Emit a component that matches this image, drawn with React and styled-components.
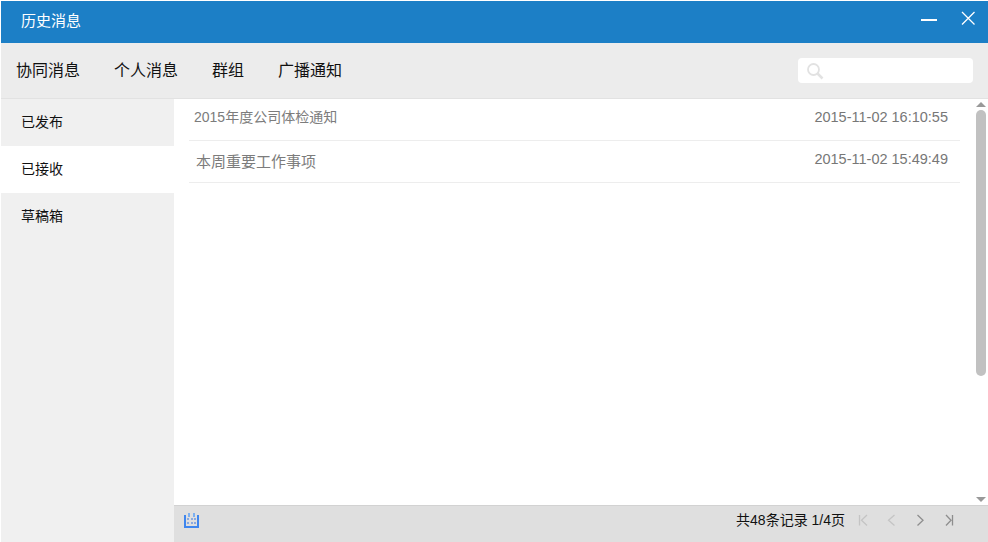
import React from "react";
import styled, { createGlobalStyle } from "styled-components";

const GlobalStyle = createGlobalStyle`
  html, body {
    margin: 0;
    padding: 0;
    background: #fff;
  }
  body {
    font-family: "Liberation Sans", "Noto Sans CJK SC", sans-serif;
  }
`;

const Win = styled.div`
  width: 988px;
  height: 542px;
  box-sizing: border-box;
  padding: 1px 0 0 1px;
  display: flex;
  flex-direction: column;
  overflow: hidden;
  background: #fff;
`;

const TitleBar = styled.div`
  height: 42px;
  flex: none;
  background: #1c7fc6;
  display: flex;
  align-items: center;
  padding: 0 12px 0 20px;
`;

const Title = styled.div`
  flex: 1;
  color: #fff;
  font-size: 15px;
  padding-bottom: 5px;
`;

const WinButton = styled.button`
  width: 16px;
  height: 16px;
  padding: 0;
  margin-left: 23px;
  margin-top: -8px;
  border: 0;
  background: transparent;
  display: flex;
`;

const Toolbar = styled.div`
  height: 55px;
  flex: none;
  box-sizing: border-box;
  background: #ececec;
  display: flex;
  align-items: center;
  padding: 0 15px;
`;

const Tabs = styled.div`
  flex: 1;
  display: flex;
  gap: 34px;
  padding-bottom: 4px;
`;

const Tab = styled.div`
  font-size: 16px;
  color: #111;
`;

const Search = styled.div`
  width: 175px;
  height: 25px;
  background: #fff;
  border-radius: 4px;
  display: flex;
  align-items: center;
  padding-left: 8px;
  box-sizing: border-box;
`;

const Body = styled.div`
  flex: 1;
  min-height: 0;
  display: flex;
  border-top: 1px solid #e2e2e2;
`;

const Sidebar = styled.div`
  width: 173px;
  flex: none;
  background: #f0f0f0;
`;

const SideItem = styled.div`
  height: 47px;
  box-sizing: border-box;
  display: flex;
  align-items: center;
  padding: 0 0 4px 20px;
  font-size: 14px;
  color: #111;
  background: ${(p) => (p.$active ? "#fff" : "transparent")};
`;

const Main = styled.div`
  flex: 1;
  min-width: 0;
  display: flex;
  flex-direction: column;
`;

const Content = styled.div`
  flex: 1;
  min-height: 0;
  display: flex;
`;

const List = styled.div`
  flex: 1;
  padding: 0 14px 0 15px;
`;

const Row = styled.div`
  height: 31px;
  border-bottom: 1px solid #ededed;
  display: flex;
  align-items: flex-start;
  justify-content: space-between;
  padding: 10px 12px 0 ${(p) => p.$indent}px;
  font-size: ${(p) => p.$size}px;
  line-height: ${(p) => p.$lineHeight}px;
  color: #7c7c7c;
`;

const Time = styled.span`
  font-size: 14.5px;
  line-height: 16px;
  color: #777;
`;

const Scrollbar = styled.div`
  width: 14px;
  flex: none;
  display: flex;
  flex-direction: column;
  align-items: center;
`;

const Arrow = styled.div`
  width: 0;
  height: 0;
  margin: ${(p) => (p.$down ? "0 0 3px" : "3px 0 0")};
  border-left: 5px solid transparent;
  border-right: 5px solid transparent;
  ${(p) => (p.$down ? "border-top" : "border-bottom")}: 5px solid #999;
`;

const Thumb = styled.div`
  width: 10px;
  height: 266px;
  margin-top: 3px;
  border-radius: 5px;
  background: #c1c1c1;
`;

const Track = styled.div`
  flex: 1;
`;

const Footer = styled.div`
  height: 37px;
  flex: none;
  box-sizing: border-box;
  background: #dfdfdf;
  border-top: 1px solid #d2d2d2;
  display: flex;
  align-items: center;
  padding: 0 25px 6px 10px;
`;

const Count = styled.div`
  margin-left: auto;
  margin-right: 4px;
  padding-bottom: 4px;
  font-size: 14px;
  color: #111;
`;

const PageButton = styled.button`
  width: 28.500px;
  height: 16px;
  padding: 0;
  border: 0;
  background: transparent;
  display: flex;
  justify-content: center;
`;

const pager = [
  { d: "M3.500 2v10.500M11 2L5.500 7.250l5.500 5.250", color: "#c4c4c4" },
  { d: "M10.500 2L4.500 7.250l6 5.250", color: "#c4c4c4" },
  { d: "M4.500 2l5.500 5.250L4.500 12.500", color: "#8e8e8e" },
  { d: "M5 2l5 5.250L5 12.500M11.500 2v10.500", color: "#8e8e8e" },
];

const App = () => (
  <Win>
    <GlobalStyle />
    <TitleBar>
      <Title>历史消息</Title>
      <WinButton aria-label="最小化">
        <svg width="16" height="16" viewBox="0 0 16 16">
          <path d="M0 10h16" stroke="#fff" strokeWidth="2" />
        </svg>
      </WinButton>
      <WinButton aria-label="关闭">
        <svg width="16" height="16" viewBox="0 0 16 16">
          <path d="M2 2l12.500 12.500M14.500 2L2 14.500" stroke="#fff" strokeWidth="1.300" fill="none" />
        </svg>
      </WinButton>
    </TitleBar>
    <Toolbar>
      <Tabs>
        <Tab>协同消息</Tab>
        <Tab>个人消息</Tab>
        <Tab>群组</Tab>
        <Tab>广播通知</Tab>
      </Tabs>
      <Search>
        <svg width="18" height="18" viewBox="0 0 18 18" fill="none" stroke="#e2e2e2">
          <circle cx="7.500" cy="7.500" r="5.500" strokeWidth="1.800" />
          <path d="M11.500 11.500l5 5" strokeWidth="2.500" />
        </svg>
      </Search>
    </Toolbar>
    <Body>
      <Sidebar>
        <SideItem>已发布</SideItem>
        <SideItem $active>已接收</SideItem>
        <SideItem>草稿箱</SideItem>
      </Sidebar>
      <Main>
        <Content>
          <List>
            <Row $indent={5} $size={14} $lineHeight={16}>
              <span>2015年度公司体检通知</span>
              <Time>2015-11-02 16:10:55</Time>
            </Row>
            <Row $indent={7} $size={15} $lineHeight={21}>
              <span>本周重要工作事项</span>
              <Time>2015-11-02 15:49:49</Time>
            </Row>
          </List>
          <Scrollbar>
            <Arrow />
            <Thumb />
            <Track />
            <Arrow $down />
          </Scrollbar>
        </Content>
        <Footer>
          <svg width="16" height="16" viewBox="0 0 16 16" shapeRendering="crispEdges">
            <path d="M0 2h2v10.500h11V2h2v13H0z" fill="#3f86ee" />
            <path d="M4 0h2v4H4zM9 0h2v4H9z" fill="#7db0f0" />
            <path d="M3 5h2v2H3zM6.500 5h2v2h-2zM10 5h2v2h-2zM3 9h2v2H3zM6.500 9h2v2h-2zM10 9h2v2h-2z" fill="#8aa9df" />
          </svg>
          <Count>共48条记录 1/4页</Count>
          {pager.map((p) => (
            <PageButton key={p.d}>
              <svg width="15" height="15" viewBox="0 0 15 15" fill="none" stroke={p.color} strokeWidth="1.300">
                <path d={p.d} />
              </svg>
            </PageButton>
          ))}
        </Footer>
      </Main>
    </Body>
  </Win>
);

export default App;
